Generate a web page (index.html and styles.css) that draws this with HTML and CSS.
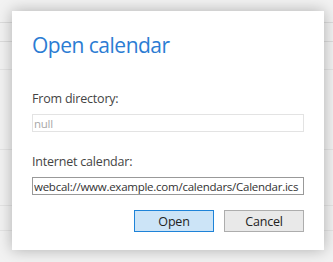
FILE: index.html
```html
<!DOCTYPE html>
<html lang="en">
<head>
    <meta charset="UTF-8">
    <meta name="viewport" content="width=device-width, initial-scale=1.0">
    <title>Open calendar</title>
    <link rel="stylesheet" href="styles.css">
</head>
<body>
    <div class="dialog">
        <h1 class="title">Open calendar</h1>

        <label class="field-label" for="directory">From directory:</label>
        <input class="field field-disabled" id="directory" type="text" value="null" disabled>

        <label class="field-label" for="url">Internet calendar:</label>
        <input class="field field-url" id="url" type="text" value="webcal://www.example.com/calendars/Calendar.ics">

        <div class="buttons">
            <button class="btn btn-primary">Open</button>
            <button class="btn">Cancel</button>
        </div>
    </div>
</body>
</html>
```

FILE: styles.css
```css
html, body {
    margin: 0;
    height: 100%;
}
body {
    font-family: "Open Sans", "Noto Sans", sans-serif;
    color: #333;
    overflow: hidden;
    background-color: #f2f2f2;
    background-image:
        linear-gradient(#dcdcdc, #dcdcdc),
        linear-gradient(#dcdcdc, #dcdcdc),
        linear-gradient(#e4e4e4, #e4e4e4),
        linear-gradient(#e4e4e4, #e4e4e4),
        linear-gradient(#e4e4e4, #e4e4e4),
        linear-gradient(#e4e4e4, #e4e4e4);
    background-size: 100% 1px;
    background-repeat: no-repeat;
    background-position: 0 22px, 0 41px, 0 69px, 0 149px, 0 205px, 0 230px;
    padding-top: 11px;
    box-sizing: border-box;
}
.dialog {
    width: 312px;
    height: 239px;
    margin-left: 12px;
    box-sizing: border-box;
    padding: 20px 20px 0 20px;
    background: #fff;
    box-shadow: 0 0 14px rgba(0, 0, 0, 0.28);
    display: flex;
    flex-direction: column;
}
.title {
    margin: 0 0 32px 0;
    font-size: 21px;
    font-weight: normal;
    letter-spacing: -0.5px;
    line-height: 28px;
    color: #2b7cd3;
}
.field-label {
    font-size: 12.5px;
    letter-spacing: -0.2px;
    line-height: 16px;
    color: #444;
    margin-bottom: 7px;
}
.field {
    width: 272px;
    height: 18px;
    box-sizing: border-box;
    margin: 0 0 22px 0;
    padding: 0 1px;
    border: 1px solid #999;
    font-family: inherit;
    font-size: 11.5px;
    letter-spacing: -0.25px;
    color: #333;
    background: #fff;
    outline: none;
}
.field-disabled {
    border-color: #e3e3e3;
    color: #a8a8a8;
}
.field-url {
    margin-bottom: 15px;
}
.buttons {
    display: flex;
    justify-content: flex-end;
    gap: 10px;
}
.btn {
    width: 80px;
    height: 22px;
    padding: 0;
    border: 1px solid #adadad;
    background: #e9e9e9;
    font-family: inherit;
    font-size: 12.5px;
    letter-spacing: -0.2px;
    color: #222;
}
.btn-primary {
    border-color: #1e83d8;
    background: #cce4f7;
}
```
